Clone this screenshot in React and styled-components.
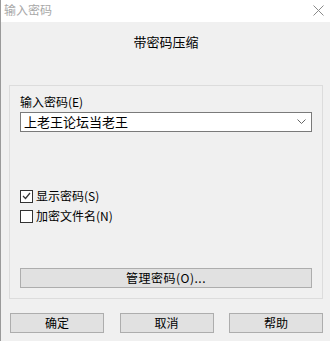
import React from 'react'
import styled, { createGlobalStyle } from 'styled-components'

const GlobalStyle = createGlobalStyle`
  html, body {
    margin: 0;
    padding: 0;
    background: #f0f0f0;
  }
  * {
    box-sizing: border-box;
  }
`

const FONT = '"Noto Sans CJK SC", "Microsoft YaHei", sans-serif'

const Window = styled.div`
  display: flex;
  flex-direction: column;
  width: 330px;
  height: 341px;
  background: #f0f0f0;
  border-left: 1px solid #9a9a9a;
  font-family: ${FONT};
  color: #000;
  overflow: hidden;
`

const TitleBar = styled.div`
  display: flex;
  align-items: center;
  justify-content: space-between;
  height: 23px;
  padding: 0 6px 2px 3px;
  background: #ffffff;
`

const TitleText = styled.span`
  font-size: 12px;
  line-height: 14px;
  color: #a8a8a8;
`

const CloseGlyph = styled.svg`
  width: 11px;
  height: 11px;
`

const Body = styled.div`
  display: flex;
  flex-direction: column;
  padding: 0 7px 8px 8px;
  flex: 1;
`

const Heading = styled.div`
  margin-top: 12px;
  height: 16px;
  font-size: 13px;
  line-height: 16px;
  text-align: center;
`

const Group = styled.div`
  display: flex;
  flex-direction: column;
  margin-top: 35px;
  height: 214px;
  padding: 9px 10px 0 10px;
  border: 1px solid #dcdcdc;
`

const Label = styled.div`
  font-size: 12px;
  line-height: 14px;
`

const Combo = styled.div`
  display: flex;
  align-items: center;
  justify-content: space-between;
  margin-top: 3px;
  height: 20px;
  padding: 0 5px 0 3px;
  background: #ffffff;
  border: 1px solid #7a7a7a;
  font-size: 13px;
  line-height: 16px;
`

const Chevron = styled.svg`
  width: 9px;
  height: 6px;
`

const CheckRow = styled.div`
  display: flex;
  align-items: center;
  height: 16px;
  margin-top: ${(p) => p.$gap}px;
  font-size: 12px;
  line-height: 14px;
`

const Box = styled.span`
  display: flex;
  align-items: center;
  justify-content: center;
  width: 13px;
  height: 13px;
  margin-right: 3px;
  background: #ffffff;
  border: 1px solid #333333;
`

const Button = styled.div`
  display: flex;
  align-items: center;
  justify-content: center;
  height: 20px;
  background: #e1e1e1;
  border: 1px solid #adadad;
  font-size: 12px;
  line-height: 14px;
  letter-spacing: ${(p) => (p.$spaced ? '0.5px' : '0')};
`

const ManageButton = styled(Button)`
  margin-top: 44px;
`

const ButtonRow = styled.div`
  display: grid;
  grid-template-columns: repeat(3, 94px);
  justify-content: space-between;
  margin-top: 14px;
  padding-left: 1px;
`

function CheckBox({ checked, label, gap }) {
  return (
    <CheckRow $gap={gap}>
      <Box>
        {checked && (
          <svg width="9" height="8" viewBox="0 0 9 8">
            <path d="M1 4 L3.5 6.5 L8 1" fill="none" stroke="#333" strokeWidth="1.2" />
          </svg>
        )}
      </Box>
      {label}
    </CheckRow>
  )
}

export default function App() {
  return (
    <>
      <GlobalStyle />
      <Window>
        <TitleBar>
          <TitleText>输入密码</TitleText>
          <CloseGlyph viewBox="0 0 11 11">
            <path d="M0.5 0.5 L10.5 10.5 M10.5 0.5 L0.5 10.5" stroke="#8a8a8a" strokeWidth="1" />
          </CloseGlyph>
        </TitleBar>
        <Body>
          <Heading>带密码压缩</Heading>
          <Group>
            <Label>输入密码(E)</Label>
            <Combo>
              <span>上老王论坛当老王</span>
              <Chevron viewBox="0 0 9 6">
                <path d="M0.5 0.5 L4.5 4.5 L8.5 0.5" fill="none" stroke="#666" strokeWidth="1" />
              </Chevron>
            </Combo>
            <CheckBox checked label="显示密码(S)" gap={56} />
            <CheckBox label="加密文件名(N)" gap={4} />
            <ManageButton $spaced>管理密码(O)...</ManageButton>
          </Group>
          <ButtonRow>
            <Button>确定</Button>
            <Button>取消</Button>
            <Button>帮助</Button>
          </ButtonRow>
        </Body>
      </Window>
    </>
  )
}
